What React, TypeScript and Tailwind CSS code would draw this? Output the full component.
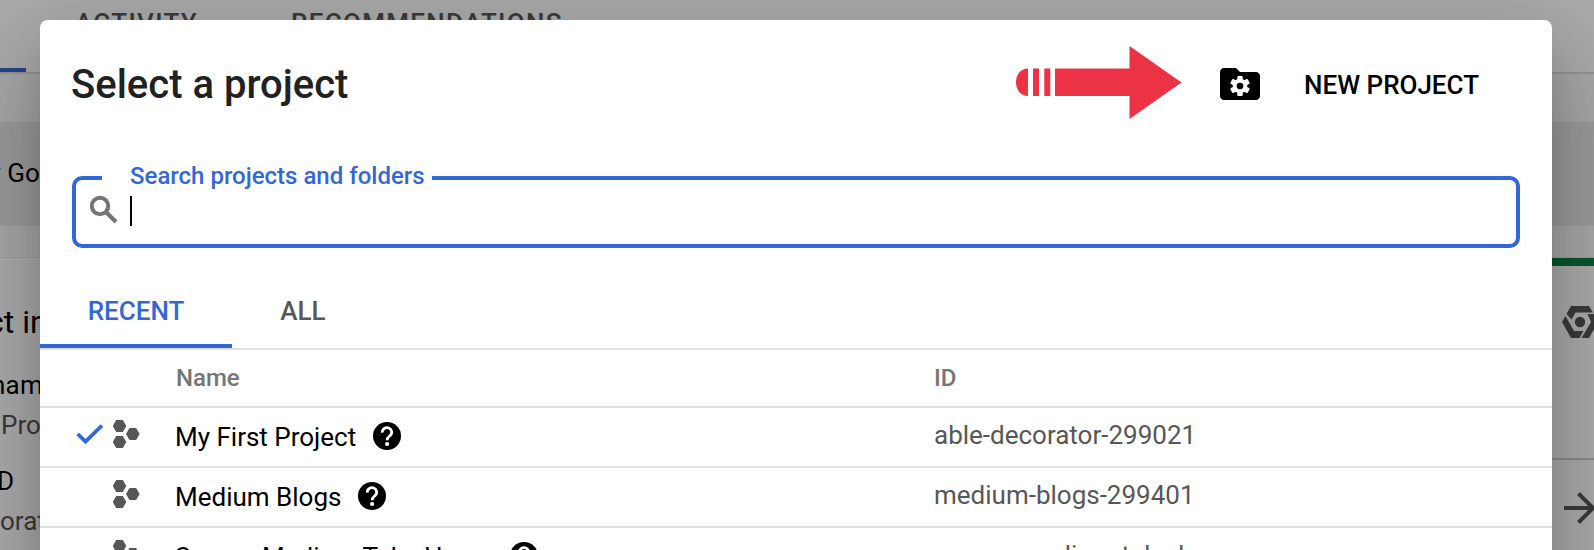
import type { ReactNode } from "react";

function ProjectIcon() {
  return (
    <svg className="h-7 w-[27px] shrink-0 overflow-visible" viewBox="0 0 27 28" fill="#575757">
      <path d="M3.200 0h6.600l3.500 6-3.500 6H3.200L-.2 6z" />
      <path d="M3.200 16h6.600l3.500 6-3.500 6H3.200L-.2 22z" />
      <path d="M16.500 8h6.600l3.500 6-3.500 6h-6.600l-3.500-6z" />
    </svg>
  );
}

function HelpIcon() {
  return (
    <svg className="h-7 w-7 shrink-0" viewBox="0 0 28 28">
      <circle cx="14" cy="14" r="14" />
      <path d="M9.300 10.600A4.700 4.500 0 1 1 17 13.600C15 15.300 14.100 16 14.100 18.200" fill="none" stroke="#fff" strokeWidth="2.800" />
      <rect x="12.200" y="20.200" width="3.800" height="3.600" rx="0.800" fill="#fff" />
    </svg>
  );
}

function CheckIcon() {
  return (
    <svg className="h-9 w-9" viewBox="0 0 36 36" fill="none" stroke="#3367d6" strokeWidth="3.800">
      <path d="M5.700 18L13.500 25.700 30 9.500" />
    </svg>
  );
}

function ArrowGraphic() {
  return (
    <svg className="h-[74px] w-[166px]" viewBox="0 0 166 74" fill="#eb3345">
      <path d="M12 22.500v27.500C4 50 0 43 0 36.200S4 22.500 12 22.500zM17 22.500h6v27.500h-6zM28.300 22.500h6v27.500h-6zM39 22.500h74.500V0L165.500 36.500 113.500 73V50H39z" />
    </svg>
  );
}

function FolderIcon() {
  return (
    <svg className="h-8 w-10" viewBox="0 0 40 32">
      <path d="M4 0h12l4 4h16c2.200 0 4 1.800 4 4v20c0 2.200-1.800 4-4 4H4c-2.200 0-4-1.800-4-4V4c0-2.200 1.800-4 4-4z" />
      <g transform="translate(20 18)">
        <g fill="#fff">
          <circle r="7.300" />
          <rect x="-2.700" y="-10" width="5.400" height="20" rx="0.800" />
          <rect x="-2.700" y="-10" width="5.400" height="20" rx="0.800" transform="rotate(60)" />
          <rect x="-2.700" y="-10" width="5.400" height="20" rx="0.800" transform="rotate(120)" />
        </g>
        <circle r="3.300" />
      </g>
    </svg>
  );
}

function Row({ name, id, selected }: { name: string; id: string; selected?: boolean }) {
  return (
    <div className="flex h-[60px] shrink-0 border-b-2 border-[#e0e0e0] text-[26px] leading-[30px]">
      <div className="flex w-[73px] justify-end pt-2 pr-[5px]">{selected && <CheckIcon />}</div>
      <div className="w-[62px] pt-3">
        <ProjectIcon />
      </div>
      <div className="flex w-[759px] gap-[16.500px] pt-[14px] whitespace-nowrap text-black">
        <span>{name}</span>
        <HelpIcon />
      </div>
      <div className="pt-3 whitespace-nowrap text-[#575757]">{id}</div>
    </div>
  );
}

function Line({ className, children }: { className: string; children: ReactNode }) {
  return <div className={`shrink-0 whitespace-nowrap ${className}`}>{children}</div>;
}

function Backdrop() {
  return (
    <div className="flex h-full flex-col bg-white">
      <div className="flex h-[74px] shrink-0 items-start justify-between border-b-2 border-[#dcdcdc]">
        <div className="flex pt-2 text-[26px] leading-[30px] font-medium tracking-[1.300px] text-[#575757]">
          <div className="h-16 w-[26px] border-b-4 border-[#3367d6]" />
          <span className="w-[216px] shrink-0 pl-[49px]">ACTIVITY</span>
          <span className="pl-[49px]">RECOMMENDATIONS</span>
        </div>
      </div>
      <div className="h-12 shrink-0 bg-[#fafafa]" />
      <div className="h-[104px] shrink-0 overflow-hidden bg-[#e8e8e8] pt-[36px] text-[26px] leading-[30px] whitespace-nowrap">
        <span className="-ml-[11.500px]">y Google</span>
      </div>
      <div className="h-[31px] shrink-0 bg-[#fafafa]" />
      <div className="flex grow justify-between border-t border-[#e8e8e8]">
        <div className="flex w-[40px] flex-col overflow-hidden">
          <Line className="mt-[42px] -ml-[13px] text-[32px] leading-[44px]">ct info</Line>
          <Line className="mt-[26px] -ml-[9px] text-[26px] leading-[30px] tracking-[0.200px]">name</Line>
          <Line className="mt-[10px] ml-px text-[26px] leading-[30px] text-[#575757]">Project</Line>
          <Line className="mt-[26px] -ml-[3px] text-[26px] leading-[30px]">D</Line>
          <Line className="mt-[10px] text-[26px] leading-[30px] text-[#575757]">orator</Line>
        </div>
        <div className="flex w-[42px] flex-col border-t-8 border-[#0f8043]">
          <div className="h-[194px] shrink-0 overflow-hidden border-b-2 border-[#cfcfcf] pt-10 pl-[10px]">
            <svg className="h-8 w-9 max-w-none" viewBox="0 0 36 32" fill="#575757">
              <path d="M9 0h18l4 6.500H13.500L9.500 13.500 4.500 8z" />
              <path d="M3.500 10l8.500 15h9.500L17.500 32H9L0 16z" />
              <path d="M25.500 8H32l4 8-9 16H19.500l9.500-16z" />
              <circle cx="18" cy="16" r="5.200" />
            </svg>
          </div>
          <svg className="mt-8 ml-3 h-8 w-8 shrink-0" viewBox="0 0 32 32" fill="none" stroke="#575757" strokeWidth="4">
            <path d="M0 16h29M14.500 1.500L29 16 14.500 30.500" />
          </svg>
        </div>
      </div>
    </div>
  );
}

function ProjectDialog() {
  return (
    <div className="absolute top-5 left-10 flex h-[700px] w-[1512px] flex-col rounded-t-lg bg-white shadow-[0_22px_30px_-14px_rgba(0,0,0,0.2),0_48px_76px_6px_rgba(0,0,0,0.14),0_18px_92px_16px_rgba(0,0,0,0.12)]">
      <div className="flex h-[156px] shrink-0 items-start pr-[73px] pl-[31px]">
        <h1 className="grow pt-[41px] text-[40px] leading-[48px] font-medium text-[#212121]">Select a project</h1>
        <div className="pt-[26px]">
          <ArrowGraphic />
        </div>
        <div className="ml-[38px] pt-12">
          <FolderIcon />
        </div>
        <button className="ml-[44px] pt-[50px] text-[26px] leading-[30px] font-medium">NEW PROJECT</button>
      </div>
      <div className="relative mx-8 flex h-[72px] shrink-0 items-start rounded-[10px] border-4 border-[#3367d6]">
        <label className="absolute -top-[19px] left-[26px] w-[330px] bg-white pl-7 text-[24px] leading-[30px] font-medium whitespace-nowrap text-[#3367d6]">
          Search projects and folders
        </label>
        <svg className="mt-[11px] ml-[9px] h-[37px] w-[37px]" viewBox="0 0 37 37" fill="none" stroke="#757575">
          <circle cx="15" cy="15" r="8.200" strokeWidth="4" />
          <path d="M20.500 20.500L31 31" strokeWidth="4.200" />
        </svg>
        <div className="mt-4 ml-2 h-[30px] w-[2px] bg-black" />
      </div>
      <div className="flex h-[102px] shrink-0 items-end border-b-2 border-[#e0e0e0] text-[26px] leading-[30px] font-medium">
        <div className="h-[60px] w-48 border-b-4 border-[#3367d6] pt-2 text-center text-[#3367d6]">RECENT</div>
        <div className="h-[60px] w-[142px] pt-2 text-center text-[#575757]">ALL</div>
      </div>
      <div className="flex h-[58px] shrink-0 border-b-2 border-[#e0e0e0] pt-[13px] pl-[136px] text-[24px] leading-[30px] font-medium text-[#757575]">
        <div className="w-[758px]">Name</div>
        <div>ID</div>
      </div>
      <Row name="My First Project" id="able-decorator-299021" selected />
      <Row name="Medium Blogs" id="medium-blogs-299401" />
      <Row name="Source Medium Take Home" id="source-medium-take-home" />
    </div>
  );
}

export default function App() {
  return (
    <div className="relative h-[550px] w-full overflow-hidden font-['Roboto',sans-serif] text-black">
      <Backdrop />
      <div className="absolute inset-0 bg-black/33" />
      <ProjectDialog />
    </div>
  );
}
